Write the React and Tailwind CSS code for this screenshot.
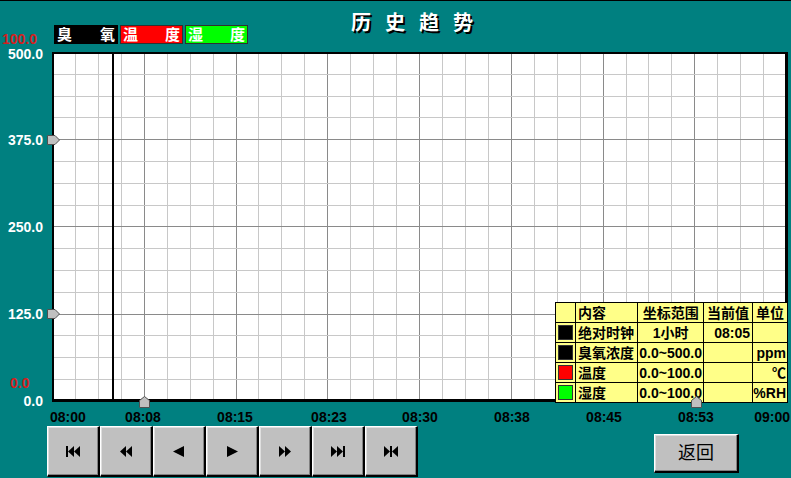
import React from "react";

const times = [
  { t: "08:00", x: 50, align: "left" },
  { t: "08:08", x: 143 },
  { t: "08:15", x: 235 },
  { t: "08:23", x: 329 },
  { t: "08:30", x: 420 },
  { t: "08:38", x: 512 },
  { t: "08:45", x: 604 },
  { t: "08:53", x: 696 },
  { t: "09:00", x: 790, align: "right" },
];

const yLabels = [
  { v: "500.0", y: 54 },
  { v: "375.0", y: 140 },
  { v: "250.0", y: 227 },
  { v: "125.0", y: 314 },
  { v: "0.0", y: 401 },
];

const rows = [
  { sw: "bg-black", name: "绝对时钟", range: "1小时", cur: "08:05", unit: "" },
  { sw: "bg-black", name: "臭氧浓度", range: "0.0~500.0", cur: "", unit: "ppm" },
  { sw: "bg-[#ff0000]", name: "温度", range: "0.0~100.0", cur: "", unit: "℃" },
  { sw: "bg-[#00ff00]", name: "湿度", range: "0.0~100.0", cur: "", unit: "%RH" },
];

const Tri = ({ d }) => (
  <svg width="16" height="11" viewBox="0 0 16 11" className="fill-black">
    {d}
  </svg>
);

const icons = [
  <Tri key="a" d={<><rect x="1" y="0" width="2" height="11" /><polygon points="9,0 3,5.5 9,11" /><polygon points="15,0 9,5.5 15,11" /></>} />,
  <Tri key="b" d={<><polygon points="8,0 2,5.5 8,11" /><polygon points="14,0 8,5.5 14,11" /></>} />,
  <Tri key="c" d={<polygon points="13,0 2,5.5 13,11" />} />,
  <Tri key="d" d={<polygon points="3,0 14,5.5 3,11" />} />,
  <Tri key="e" d={<><polygon points="2,0 8,5.5 2,11" /><polygon points="8,0 14,5.5 8,11" /></>} />,
  <Tri key="f" d={<><polygon points="1,0 7,5.5 1,11" /><polygon points="7,0 13,5.5 7,11" /><rect x="13" y="0" width="2" height="11" /></>} />,
  <Tri key="g" d={<><polygon points="1,0 7,5.5 1,11" /><rect x="7" y="0" width="2" height="11" /><polygon points="15,0 9,5.5 15,11" /></>} />,
];

const bevel =
  "bg-[#c0c0c0] border-t border-l border-white border-r-2 border-b-2 border-r-black border-b-black shadow-[inset_-1px_-1px_0_#808080,inset_1px_1px_0_#dfdfdf]";

function Chart() {
  const v = Array.from({ length: 31 }, (_, i) => i + 1);
  const h = Array.from({ length: 15 }, (_, i) => i + 1);
  return (
    <div className="relative w-[736px] h-[350px] bg-white">
      <svg width="736" height="350" className="absolute inset-0">
        {v.map((k) => {
          const x = Math.round(k * 22.94) + 0.5;
          return (
            <line key={"v" + k} x1={x} x2={x} y1="0" y2="350" stroke={k % 4 === 0 ? "#8a8a8a" : "#c8c8c8"} strokeWidth="1" />
          );
        })}
        {h.map((k) => {
          const y = Math.round(k * 21.8) + 0.5;
          return (
            <line key={"h" + k} x1="0" x2="736" y1={y} y2={y} stroke={k % 4 === 0 ? "#8a8a8a" : "#c8c8c8"} strokeWidth="1" />
          );
        })}
        <rect x="60" y="0" width="2" height="350" fill="#000" />
        <rect x="0" y="0" width="2" height="350" fill="#000" />
        <rect x="0" y="0" width="736" height="2" fill="#000" />
        <rect x="733" y="0" width="3" height="350" fill="#000" />
        <rect x="0" y="347" width="736" height="3" fill="#000" />
      </svg>

      {/* legend table */}
      <table className="absolute left-[503px] top-[250px] border-collapse bg-[#ffff88] text-[14px] font-bold text-black leading-none">
        <tbody>
          <tr className="h-[20px]">
            <td className="w-[20px] border border-black"></td>
            <td className="w-[63px] border border-black pl-[2px]">内容</td>
            <td className="w-[66px] border border-black text-center">坐标范围</td>
            <td className="w-[49px] border border-black text-center">当前值</td>
            <td className="w-[35px] border border-black text-center">单位</td>
          </tr>
          {rows.map((r) => (
            <tr key={r.name} className="h-[20px]">
              <td className="border border-black">
                <div className={`mx-auto w-[15px] h-[15px] border border-[#333] ${r.sw}`} />
              </td>
              <td className="border border-black pl-[2px]">{r.name}</td>
              <td className="border border-black text-center">{r.range}</td>
              <td className="border border-black text-right pr-[2px]">{r.cur}</td>
              <td className="border border-black text-right pr-[1px]">{r.unit}</td>
            </tr>
          ))}
        </tbody>
      </table>

      {/* axis markers */}
      <svg width="13" height="10" className="absolute left-[-5px] top-[83px]">
        <polygon points="0.5,0.5 8,0.5 12.5,5 8,9.5 0.5,9.5" fill="#c0c0c0" stroke="#505050" />
      </svg>
      <svg width="13" height="10" className="absolute left-[-5px] top-[257px]">
        <polygon points="0.5,0.5 8,0.5 12.5,5 8,9.5 0.5,9.5" fill="#c0c0c0" stroke="#505050" />
      </svg>
      <svg width="11" height="12" className="absolute left-[87px] top-[344px]">
        <polygon points="5.5,0.5 10.5,4.5 10.5,11.5 0.5,11.5 0.5,4.5" fill="#c0c0c0" stroke="#505050" />
      </svg>
      <svg width="11" height="12" className="absolute left-[639px] top-[344px]">
        <polygon points="5.5,0.5 10.5,4.5 10.5,11.5 0.5,11.5 0.5,4.5" fill="#c0c0c0" stroke="#505050" />
      </svg>
    </div>
  );
}

export default function App() {
  return (
    <div className="w-[791px] h-[478px] overflow-hidden bg-[#008080] border-t border-black font-['Liberation_Sans','Noto_Sans_CJK_SC',sans-serif]">
      {/* header */}
      <div className="h-[51px] flex items-start">
        <div className="mt-[24px] ml-[54px] flex gap-[2px] text-white font-bold text-[15px] leading-none">
          <div className="w-[64px] h-[19px] bg-black flex items-center justify-between px-[3px]">
            <span>臭</span>
            <span>氧</span>
          </div>
          <div className="w-[63px] h-[19px] bg-[#ff0000] border border-[#303030] flex items-center justify-between px-[2px]">
            <span>温</span>
            <span>度</span>
          </div>
          <div className="w-[63px] h-[19px] bg-[#00ff00] border border-[#303030] flex items-center justify-between px-[2px]">
            <span>湿</span>
            <span>度</span>
          </div>
        </div>
        <div className="ml-[103px] mt-[12px] text-white text-[20px] font-bold leading-none tracking-[14px] [text-shadow:2px_2px_0_#000]">
          历史趋势
        </div>
      </div>

      {/* chart row */}
      <div className="flex h-[351px]">
        <div className="relative w-[52px] text-[14px] font-bold leading-[16px]">
          <span className="absolute left-[2px] top-[-21px] text-[#d42020]">100.0</span>
          <span className="absolute left-[10px] top-[323px] text-[#d42020]">0.0</span>
          {yLabels.map((l) => (
            <span
              key={l.v}
              className="absolute right-[9px] text-white"
              style={{ top: l.y - 52 - 8 }}
            >
              {l.v}
            </span>
          ))}
        </div>
        <Chart />
      </div>

      {/* time axis */}
      <div className="relative h-[23px] text-[14px] font-bold leading-[16px] text-black">
        {times.map((t) => (
          <span
            key={t.t}
            className={`absolute top-[6px] ${
              t.align === "left" ? "" : t.align === "right" ? "-translate-x-full" : "-translate-x-1/2"
            }`}
            style={{ left: t.x }}
          >
            {t.t}
          </span>
        ))}
      </div>

      {/* buttons */}
      <div className="flex items-start pl-[47px]">
        {icons.map((ic, i) => (
          <button key={i} className={`w-[53px] h-[51px] flex items-center justify-center ${bevel}`}>
            {ic}
          </button>
        ))}
        <button className={`ml-[236px] mt-[8px] w-[85px] h-[39px] flex items-center justify-center text-[18px] text-black ${bevel}`}>
          返回
        </button>
      </div>
    </div>
  );
}
